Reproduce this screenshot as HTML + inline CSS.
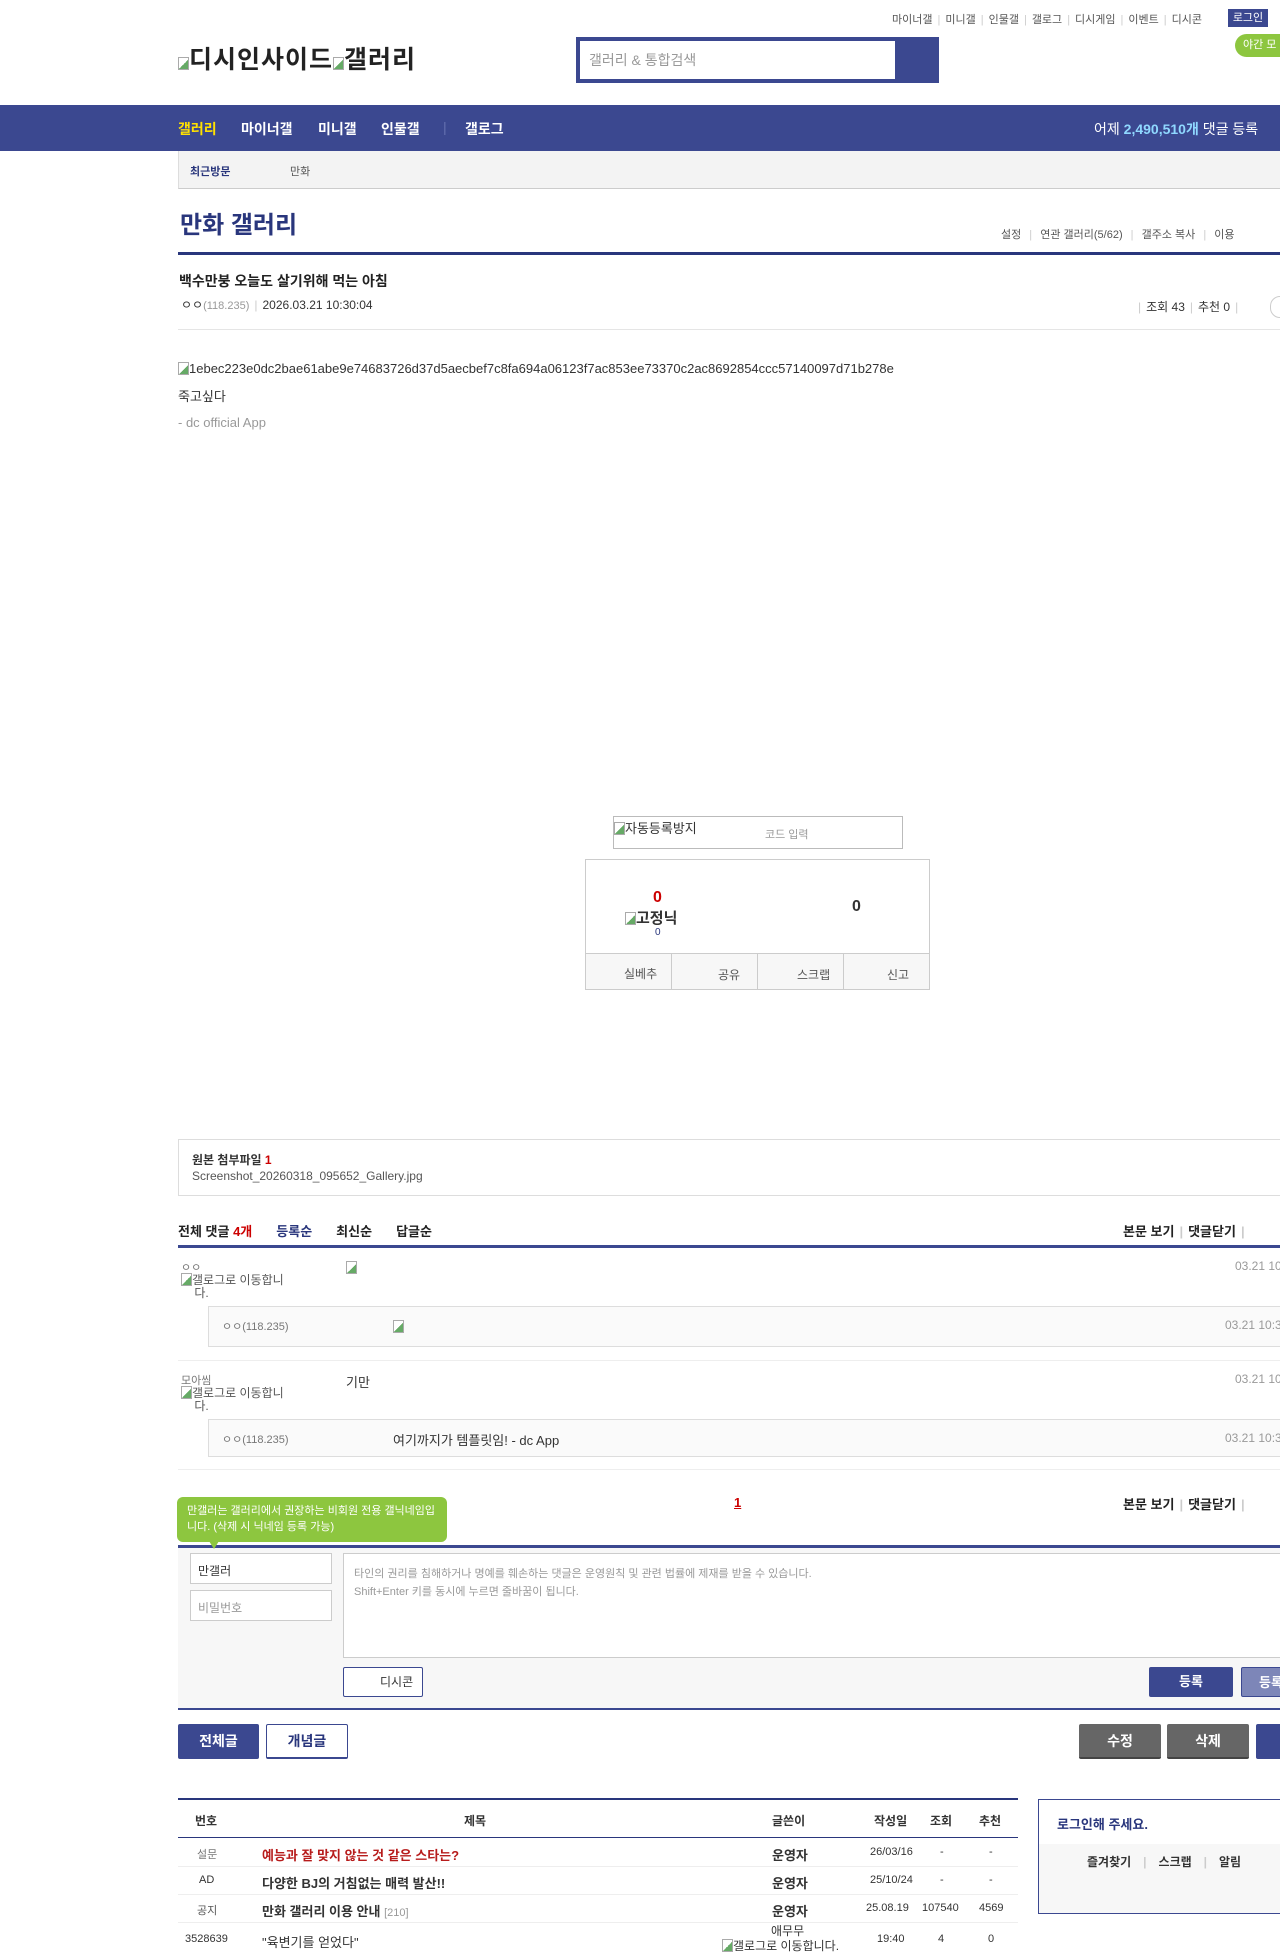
<!DOCTYPE html>
<html><head><meta charset="utf-8">
<style>
*{margin:0;padding:0;box-sizing:border-box}
body{width:1280px;height:1957px;overflow:hidden;background:#fff;font-family:"Liberation Sans","Noto Sans CJK KR",sans-serif;color:#333;position:relative;font-size:13px}
.a{position:absolute;white-space:nowrap}
.navy{background:#3b4890}
.bold{font-weight:bold}
.gray{color:#999}
.sep{color:#ccc;margin:0 5px}
.box{position:absolute;border:1px solid #ccc}
.btn{position:absolute;color:#fff;font-weight:bold;font-size:14px;text-align:center;border-radius:2px}
.bi{display:inline-block;width:11px;height:13px;border:1px solid #aaa;vertical-align:-2px;background:linear-gradient(135deg,#fff 55%,#6a6 55%)}
.nv{position:absolute;top:119px;font-size:14px;font-weight:bold;color:#fff;white-space:nowrap}
</style></head><body>

<!-- top links -->
<div class="a" style="left:892px;top:11px;font-size:11px;color:#555">마이너갤<span class="sep">|</span>미니갤<span class="sep">|</span>인물갤<span class="sep">|</span>갤로그<span class="sep">|</span>디시게임<span class="sep">|</span>이벤트<span class="sep">|</span>디시콘</div>
<div class="a navy" style="left:1228px;top:9px;width:40px;height:18px;color:#fff;font-size:11px;text-align:center;line-height:18px">로그인</div>
<div class="a" style="left:1235px;top:34px;width:60px;height:23px;background:#8dc63f;border-radius:12px;color:#fff;font-size:11px;line-height:23px;padding-left:8px">야간 모</div>

<!-- logo -->
<div class="a" style="left:178px;top:40px;font-size:25px;font-weight:bold;color:#222;letter-spacing:1px"><span class="bi"></span>디시인사이드<span class="bi"></span>갤러리</div>

<!-- search -->
<div class="a navy" style="left:576px;top:37px;width:363px;height:46px"></div>
<div class="a" style="left:580px;top:41px;width:315px;height:38px;background:#fff;color:#999;font-size:14px;line-height:38px;padding-left:9px">갤러리 &amp; 통합검색</div>

<!-- nav -->
<div class="a navy" style="left:0;top:105px;width:1280px;height:46px"></div>
<div class="nv" style="left:178px;color:#ffe100">갤러리</div>
<div class="nv" style="left:241px">마이너갤</div>
<div class="nv" style="left:318px">미니갤</div>
<div class="nv" style="left:381px">인물갤</div>
<div class="nv" style="left:443px;color:#6470b0;font-weight:normal">|</div>
<div class="nv" style="left:465px">갤로그</div>
<div class="a" style="left:1094px;top:119px;font-size:14px;color:#fff">어제 <b style="color:#8fd8ff">2,490,510개</b> 댓글 등록</div>

<!-- sub bar -->
<div class="a" style="left:178px;top:151px;width:1102px;height:38px;background:#f3f3f3;border-left:1px solid #ddd;border-bottom:1px solid #ccc"></div>
<div class="a bold" style="left:190px;top:163px;font-size:11px;color:#29367c">최근방문</div>
<div class="a" style="left:290px;top:163px;font-size:11px;color:#555">만화</div>

<!-- title -->
<div class="a bold" style="left:180px;top:205px;font-size:24px;color:#29367c">만화 갤러리</div>
<div class="a" style="left:1001px;top:226px;font-size:11px;color:#555">설정 <span class="sep">|</span> 연관 갤러리(5/62) <span class="sep">|</span> 갤주소 복사 <span class="sep">|</span> 이용</div>
<div class="a" style="left:178px;top:252px;width:1102px;height:3px;background:#29367c"></div>

<!-- post header -->
<div class="a bold" style="left:179px;top:271px;font-size:14px;color:#222">백수만붕 오늘도 살기위해 먹는 아침</div>
<div class="a" style="left:181px;top:296px;font-size:12px;color:#333">ㅇㅇ<span class="gray" style="font-size:11px">(118.235)</span><span class="sep">|</span>2026.03.21 10:30:04</div>
<div class="a" style="left:1133px;top:298px;font-size:12px;color:#333"><span class="sep">|</span>조회 43<span class="sep">|</span>추천 0<span class="sep">|</span></div>
<div class="a" style="left:1270px;top:296px;width:20px;height:22px;border:1px solid #ccc;border-radius:11px"></div>
<div class="a" style="left:178px;top:329px;width:1102px;height:1px;background:#e5e5e5"></div>

<!-- body -->
<div class="a" style="left:178px;top:361px;font-size:13px;color:#333"><span class="bi"></span>1ebec223e0dc2bae61abe9e74683726d37d5aecbef7c8fa694a06123f7ac853ee73370c2ac8692854ccc57140097d71b278e</div>
<div class="a" style="left:178px;top:386px;font-size:13px">죽고싶다</div>
<div class="a" style="left:178px;top:415px;font-size:13px;color:#999">- dc official App</div>

<!-- captcha -->
<div class="box" style="left:613px;top:816px;width:290px;height:33px;border-color:#bbb"></div>
<div class="a" style="left:614px;top:818px;font-size:13px"><span class="bi"></span>자동등록방지</div>
<div class="a" style="left:765px;top:826px;font-size:11px;color:#999">코드 입력</div>

<!-- recommend box -->
<div class="box" style="left:585px;top:859px;width:345px;height:131px"></div>
<div class="a bold" style="left:653px;top:889px;font-size:16px;color:#c00">0</div>
<div class="a" style="left:625px;top:907px;font-size:15px;font-weight:bold;color:#333"><span class="bi"></span>고정닉</div>
<div class="a" style="left:655px;top:927px;font-size:10px;color:#29367c">0</div>
<div class="a bold" style="left:852px;top:898px;font-size:16px;color:#333">0</div>
<div class="a" style="left:586px;top:953px;width:343px;height:36px;background:#f7f7f7;border-top:1px solid #ccc"></div>
<div class="a" style="left:671px;top:953px;width:1px;height:36px;background:#ccc"></div>
<div class="a" style="left:757px;top:953px;width:1px;height:36px;background:#ccc"></div>
<div class="a" style="left:843px;top:953px;width:1px;height:36px;background:#ccc"></div>
<div class="a" style="left:624px;top:965px;font-size:12px;color:#555">실베추</div>
<div class="a" style="left:718px;top:966px;font-size:12px;color:#555">공유</div>
<div class="a" style="left:797px;top:966px;font-size:12px;color:#555">스크랩</div>
<div class="a" style="left:887px;top:966px;font-size:12px;color:#555">신고</div>

<!-- attachment -->
<div class="box" style="left:178px;top:1139px;width:1120px;height:57px;border-color:#ddd"></div>
<div class="a bold" style="left:192px;top:1151px;font-size:12px;color:#333">원본 첨부파일 <span style="color:#c00">1</span></div>
<div class="a" style="left:192px;top:1169px;font-size:12px;color:#555">Screenshot_20260318_095652_Gallery.jpg</div>

<!-- comment header -->
<div class="a bold" style="left:178px;top:1221px;font-size:13px;color:#222">전체 댓글 <span style="color:#c00">4개</span><span style="color:#29367c;margin-left:24px">등록순</span><span style="margin-left:24px">최신순</span><span style="margin-left:24px">답글순</span></div>
<div class="a bold" style="left:1123px;top:1221px;font-size:13px;color:#222">본문 보기<span class="sep">|</span>댓글닫기<span class="sep">|</span></div>
<div class="a" style="left:178px;top:1245px;width:1102px;height:3px;background:#3b4890"></div>

<!-- comment 1 -->
<div class="a" style="left:181px;top:1259px;font-size:11px;color:#777">ㅇㅇ</div>
<div class="a" style="left:181px;top:1273px;font-size:12px;color:#555;line-height:13px"><span class="bi"></span>갤로그로 이동합니<br>&nbsp;&nbsp;&nbsp;&nbsp;다.</div>
<div class="a" style="left:346px;top:1260px"><span class="bi"></span></div>
<div class="a" style="left:1235px;top:1259px;font-size:12px;color:#999">03.21 10</div>
<div class="a" style="left:208px;top:1306px;width:1080px;height:41px;background:#fafafa;border:1px solid #ddd"></div>
<div class="a" style="left:222px;top:1318px;font-size:11px;color:#777">ㅇㅇ(118.235)</div>
<div class="a" style="left:393px;top:1319px"><span class="bi"></span></div>
<div class="a" style="left:1225px;top:1318px;font-size:12px;color:#999">03.21 10:3</div>
<div class="a" style="left:178px;top:1360px;width:1102px;height:1px;background:#eee"></div>

<!-- comment 2 -->
<div class="a" style="left:181px;top:1372px;font-size:11px;color:#777">모아씸</div>
<div class="a" style="left:181px;top:1386px;font-size:12px;color:#555;line-height:13px"><span class="bi"></span>갤로그로 이동합니<br>&nbsp;&nbsp;&nbsp;&nbsp;다.</div>
<div class="a" style="left:346px;top:1372px;font-size:13px">기만</div>
<div class="a" style="left:1235px;top:1372px;font-size:12px;color:#999">03.21 10</div>
<div class="a" style="left:208px;top:1419px;width:1080px;height:38px;background:#fafafa;border:1px solid #ddd"></div>
<div class="a" style="left:222px;top:1431px;font-size:11px;color:#777">ㅇㅇ(118.235)</div>
<div class="a" style="left:393px;top:1430px;font-size:13px">여기까지가 템플릿임! - dc App</div>
<div class="a" style="left:1225px;top:1431px;font-size:12px;color:#999">03.21 10:3</div>
<div class="a" style="left:178px;top:1469px;width:1102px;height:1px;background:#eee"></div>

<!-- paging -->
<div class="a bold" style="left:734px;top:1495px;font-size:13px;color:#c00;text-decoration:underline">1</div>
<div class="a bold" style="left:1123px;top:1494px;font-size:13px;color:#222">본문 보기<span class="sep">|</span>댓글닫기<span class="sep">|</span></div>

<!-- comment form -->
<div class="a" style="left:178px;top:1545px;width:1102px;height:165px;background:#f7f7f7;border-top:3px solid #3b4890;border-bottom:2px solid #3b4890"></div>
<div class="a" style="left:177px;top:1497px;width:270px;height:45px;background:#8dc63f;border-radius:6px;color:#fff;font-size:11px;line-height:16px;padding:6px 10px;white-space:normal">만갤러는 갤러리에서 권장하는 비회원 전용 갤닉네임입니다. (삭제 시 닉네임 등록 가능)</div>
<div class="a" style="left:209px;top:1541px;width:0;height:0;border-left:5px solid transparent;border-right:5px solid transparent;border-top:8px solid #8dc63f"></div>
<div class="a" style="left:190px;top:1553px;width:142px;height:31px;background:#fff;border:1px solid #ccc;font-size:12px;color:#333;padding:8px 7px">만갤러</div>
<div class="a" style="left:190px;top:1590px;width:142px;height:31px;background:#fff;border:1px solid #ccc;font-size:12px;color:#999;padding:8px 7px">비밀번호</div>
<div class="a" style="left:343px;top:1553px;width:950px;height:105px;background:#fff;border:1px solid #ccc;font-size:11px;color:#999;padding:11px 10px;line-height:18px;white-space:normal">타인의 권리를 침해하거나 명예를 훼손하는 댓글은 운영원칙 및 관련 법률에 제재를 받을 수 있습니다.<br>Shift+Enter 키를 동시에 누르면 줄바꿈이 됩니다.</div>
<div class="a" style="left:343px;top:1667px;width:80px;height:30px;background:#fff;border:1px solid #3b4890;border-radius:2px;font-size:12px;color:#333;line-height:28px;padding-left:36px">디시콘</div>
<div class="btn navy" style="left:1149px;top:1667px;width:84px;height:30px;line-height:30px;font-size:13px">등록</div>
<div class="btn" style="left:1241px;top:1667px;width:60px;height:30px;line-height:30px;font-size:13px;background:#7d86b8;border:1px solid #3b4890">등록</div>

<!-- bottom buttons -->
<div class="btn navy" style="left:178px;top:1724px;width:81px;height:35px;line-height:35px">전체글</div>
<div class="btn" style="left:266px;top:1724px;width:82px;height:35px;line-height:33px;color:#29367c;background:#fff;border:1px solid #3b4890;border-bottom-width:2px">개념글</div>
<div class="btn" style="left:1079px;top:1724px;width:82px;height:35px;line-height:35px;background:#666;border-bottom:2px solid #444">수정</div>
<div class="btn" style="left:1167px;top:1724px;width:82px;height:35px;line-height:35px;background:#666;border-bottom:2px solid #444">삭제</div>
<div class="btn navy" style="left:1256px;top:1724px;width:82px;height:35px;line-height:35px">글</div>

<!-- list table -->
<div class="a" style="left:178px;top:1798px;width:840px;height:2px;background:#29367c"></div>
<div class="a bold" style="left:195px;top:1812px;font-size:12px;color:#333">번호</div>
<div class="a bold" style="left:464px;top:1812px;font-size:12px;color:#333">제목</div>
<div class="a bold" style="left:772px;top:1812px;font-size:12px;color:#333">글쓴이</div>
<div class="a bold" style="left:874px;top:1812px;font-size:12px;color:#333">작성일</div>
<div class="a bold" style="left:930px;top:1812px;font-size:12px;color:#333">조회</div>
<div class="a bold" style="left:979px;top:1812px;font-size:12px;color:#333">추천</div>
<div class="a" style="left:178px;top:1837px;width:840px;height:1px;background:#29367c"></div>

<div class="a" style="left:197px;top:1846px;font-size:11px;color:#777">설문</div>
<div class="a bold" style="left:262px;top:1845px;font-size:13px;color:#b71c1c">예능과 잘 맞지 않는 것 같은 스타는?</div>
<div class="a bold" style="left:772px;top:1845px;font-size:13px">운영자</div>
<div class="a" style="left:870px;top:1846px;font-size:11px">26/03/16</div>
<div class="a" style="left:940px;top:1846px;font-size:11px">-</div>
<div class="a" style="left:989px;top:1846px;font-size:11px">-</div>
<div class="a" style="left:178px;top:1866px;width:840px;height:1px;background:#eee"></div>

<div class="a" style="left:199px;top:1874px;font-size:11px">AD</div>
<div class="a bold" style="left:262px;top:1873px;font-size:13px">다양한 BJ의 거침없는 매력 발산!!</div>
<div class="a bold" style="left:772px;top:1873px;font-size:13px">운영자</div>
<div class="a" style="left:870px;top:1874px;font-size:11px">25/10/24</div>
<div class="a" style="left:940px;top:1874px;font-size:11px">-</div>
<div class="a" style="left:989px;top:1874px;font-size:11px">-</div>
<div class="a" style="left:178px;top:1894px;width:840px;height:1px;background:#eee"></div>

<div class="a" style="left:197px;top:1902px;font-size:11px;color:#555">공지</div>
<div class="a" style="left:262px;top:1901px;font-size:13px"><b>만화 갤러리 이용 안내</b> <span style="color:#999;font-size:11px">[210]</span></div>
<div class="a bold" style="left:772px;top:1901px;font-size:13px">운영자</div>
<div class="a" style="left:866px;top:1902px;font-size:11px">25.08.19</div>
<div class="a" style="left:922px;top:1902px;font-size:11px">107540</div>
<div class="a" style="left:979px;top:1902px;font-size:11px">4569</div>
<div class="a" style="left:178px;top:1922px;width:840px;height:1px;background:#eee"></div>

<div class="a" style="left:185px;top:1933px;font-size:11px">3528639</div>
<div class="a" style="left:262px;top:1932px;font-size:13px">"육변기를 얻었다"</div>
<div class="a" style="left:771px;top:1922px;font-size:12px">애무무</div>
<div class="a" style="left:722px;top:1937px;font-size:12px"><span class="bi"></span>갤로그로 이동합니다.</div>
<div class="a" style="left:877px;top:1933px;font-size:11px">19:40</div>
<div class="a" style="left:938px;top:1933px;font-size:11px">4</div>
<div class="a" style="left:988px;top:1933px;font-size:11px">0</div>

<!-- login box -->
<div class="box" style="left:1038px;top:1799px;width:260px;height:115px;border-color:#3b4890"></div>
<div class="a" style="left:1039px;top:1844px;width:260px;height:69px;background:#f7f7f7"></div>
<div class="a bold" style="left:1057px;top:1814px;font-size:13px;color:#29367c">로그인해 주세요.</div>
<div class="a bold" style="left:1087px;top:1853px;font-size:12px;color:#333">즐겨찾기<span class="sep" style="margin:0 12px">|</span>스크랩<span class="sep" style="margin:0 12px">|</span>알림</div>

</body></html>
